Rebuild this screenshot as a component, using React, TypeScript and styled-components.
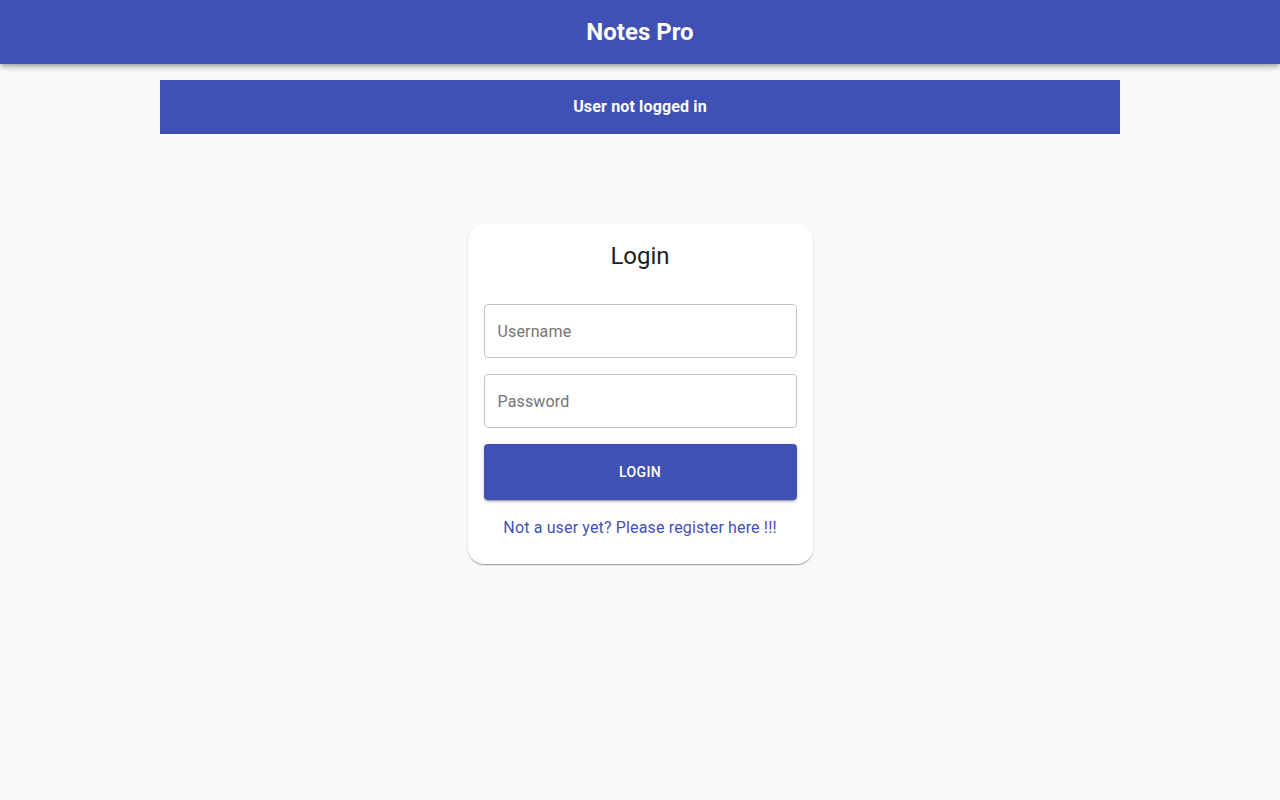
import React from "react";
import styled, { createGlobalStyle } from "styled-components";

const Global = createGlobalStyle`
  html, body { margin: 0; padding: 0; background: #fafafa; }
  body { font-family: Roboto, "Liberation Sans", Arial, sans-serif; }
  * { box-sizing: border-box; }
`;

const Page = styled.div`
  min-height: 800px;
  background: #fafafa;
  display: flex;
  flex-direction: column;
  align-items: center;
`;

const AppBar = styled.header`
  width: 100%;
  height: 64px;
  background: #3f51b5;
  color: #fff;
  display: flex;
  align-items: center;
  justify-content: center;
  box-shadow: 0 2px 4px -1px rgba(0,0,0,0.2), 0 4px 5px 0 rgba(0,0,0,0.14), 0 1px 10px 0 rgba(0,0,0,0.12);
`;

const Title = styled.h1`
  margin: 0;
  font-size: 24px;
  font-weight: 700;
  letter-spacing: 0;
`;

const Banner = styled.div`
  margin-top: 16px;
  width: 960px;
  height: 54px;
  padding-bottom: 2px;
  background: #3f51b5;
  color: #fff;
  display: flex;
  align-items: center;
  justify-content: center;
  font-size: 16px;
  font-weight: 700;
  letter-spacing: 0.15px;
`;

const Card = styled.div`
  margin-top: 90px;
  width: 345px;
  background: #fff;
  border-radius: 16px;
  padding: 16px 16px 27px;
  display: flex;
  flex-direction: column;
  align-items: stretch;
  box-shadow: 0 2px 1px -1px rgba(0,0,0,0.2), 0 1px 1px 0 rgba(0,0,0,0.14), 0 1px 3px 0 rgba(0,0,0,0.12);
`;

const CardTitle = styled.h2`
  margin: 0 0 32px;
  text-align: center;
  font-size: 24px;
  font-weight: 400;
  color: #212121;
  line-height: 32px;
`;

const Field = styled.input`
  height: 54px;
  width: 100%;
  border: 1px solid #c4c4c4;
  border-radius: 4px;
  padding: 0 13px;
  font-family: Roboto, "Liberation Sans", Arial, sans-serif;
  font-size: 16px;
  letter-spacing: 0.15px;
  color: #212121;
  margin-bottom: 16px;
  outline: none;
  &::placeholder { color: #757575; }
`;

const Button = styled.button`
  height: 56px;
  width: 100%;
  border: none;
  border-radius: 4px;
  background: #3f51b5;
  color: #fff;
  font-family: Roboto, "Liberation Sans", Arial, sans-serif;
  font-size: 14px;
  font-weight: 500;
  letter-spacing: 0.4px;
  text-transform: uppercase;
  box-shadow: 0 3px 1px -2px rgba(0,0,0,0.2), 0 2px 2px 0 rgba(0,0,0,0.14), 0 1px 5px 0 rgba(0,0,0,0.12);
  cursor: pointer;
`;

const RegisterLink = styled.a`
  margin-top: 19px;
  text-align: center;
  color: #3f51b5;
  font-size: 16px;
  letter-spacing: 0.15px;
  line-height: 18px;
  text-decoration: none;
`;

export default function App() {
  return (
    <>
      <Global />
      <Page>
        <AppBar>
          <Title>Notes Pro</Title>
        </AppBar>
        <Banner>User not logged in</Banner>
        <Card>
          <CardTitle>Login</CardTitle>
          <Field placeholder="Username" />
          <Field placeholder="Password" type="password" />
          <Button>Login</Button>
          <RegisterLink href="#">Not a user yet? Please register here !!!</RegisterLink>
        </Card>
      </Page>
    </>
  );
}
